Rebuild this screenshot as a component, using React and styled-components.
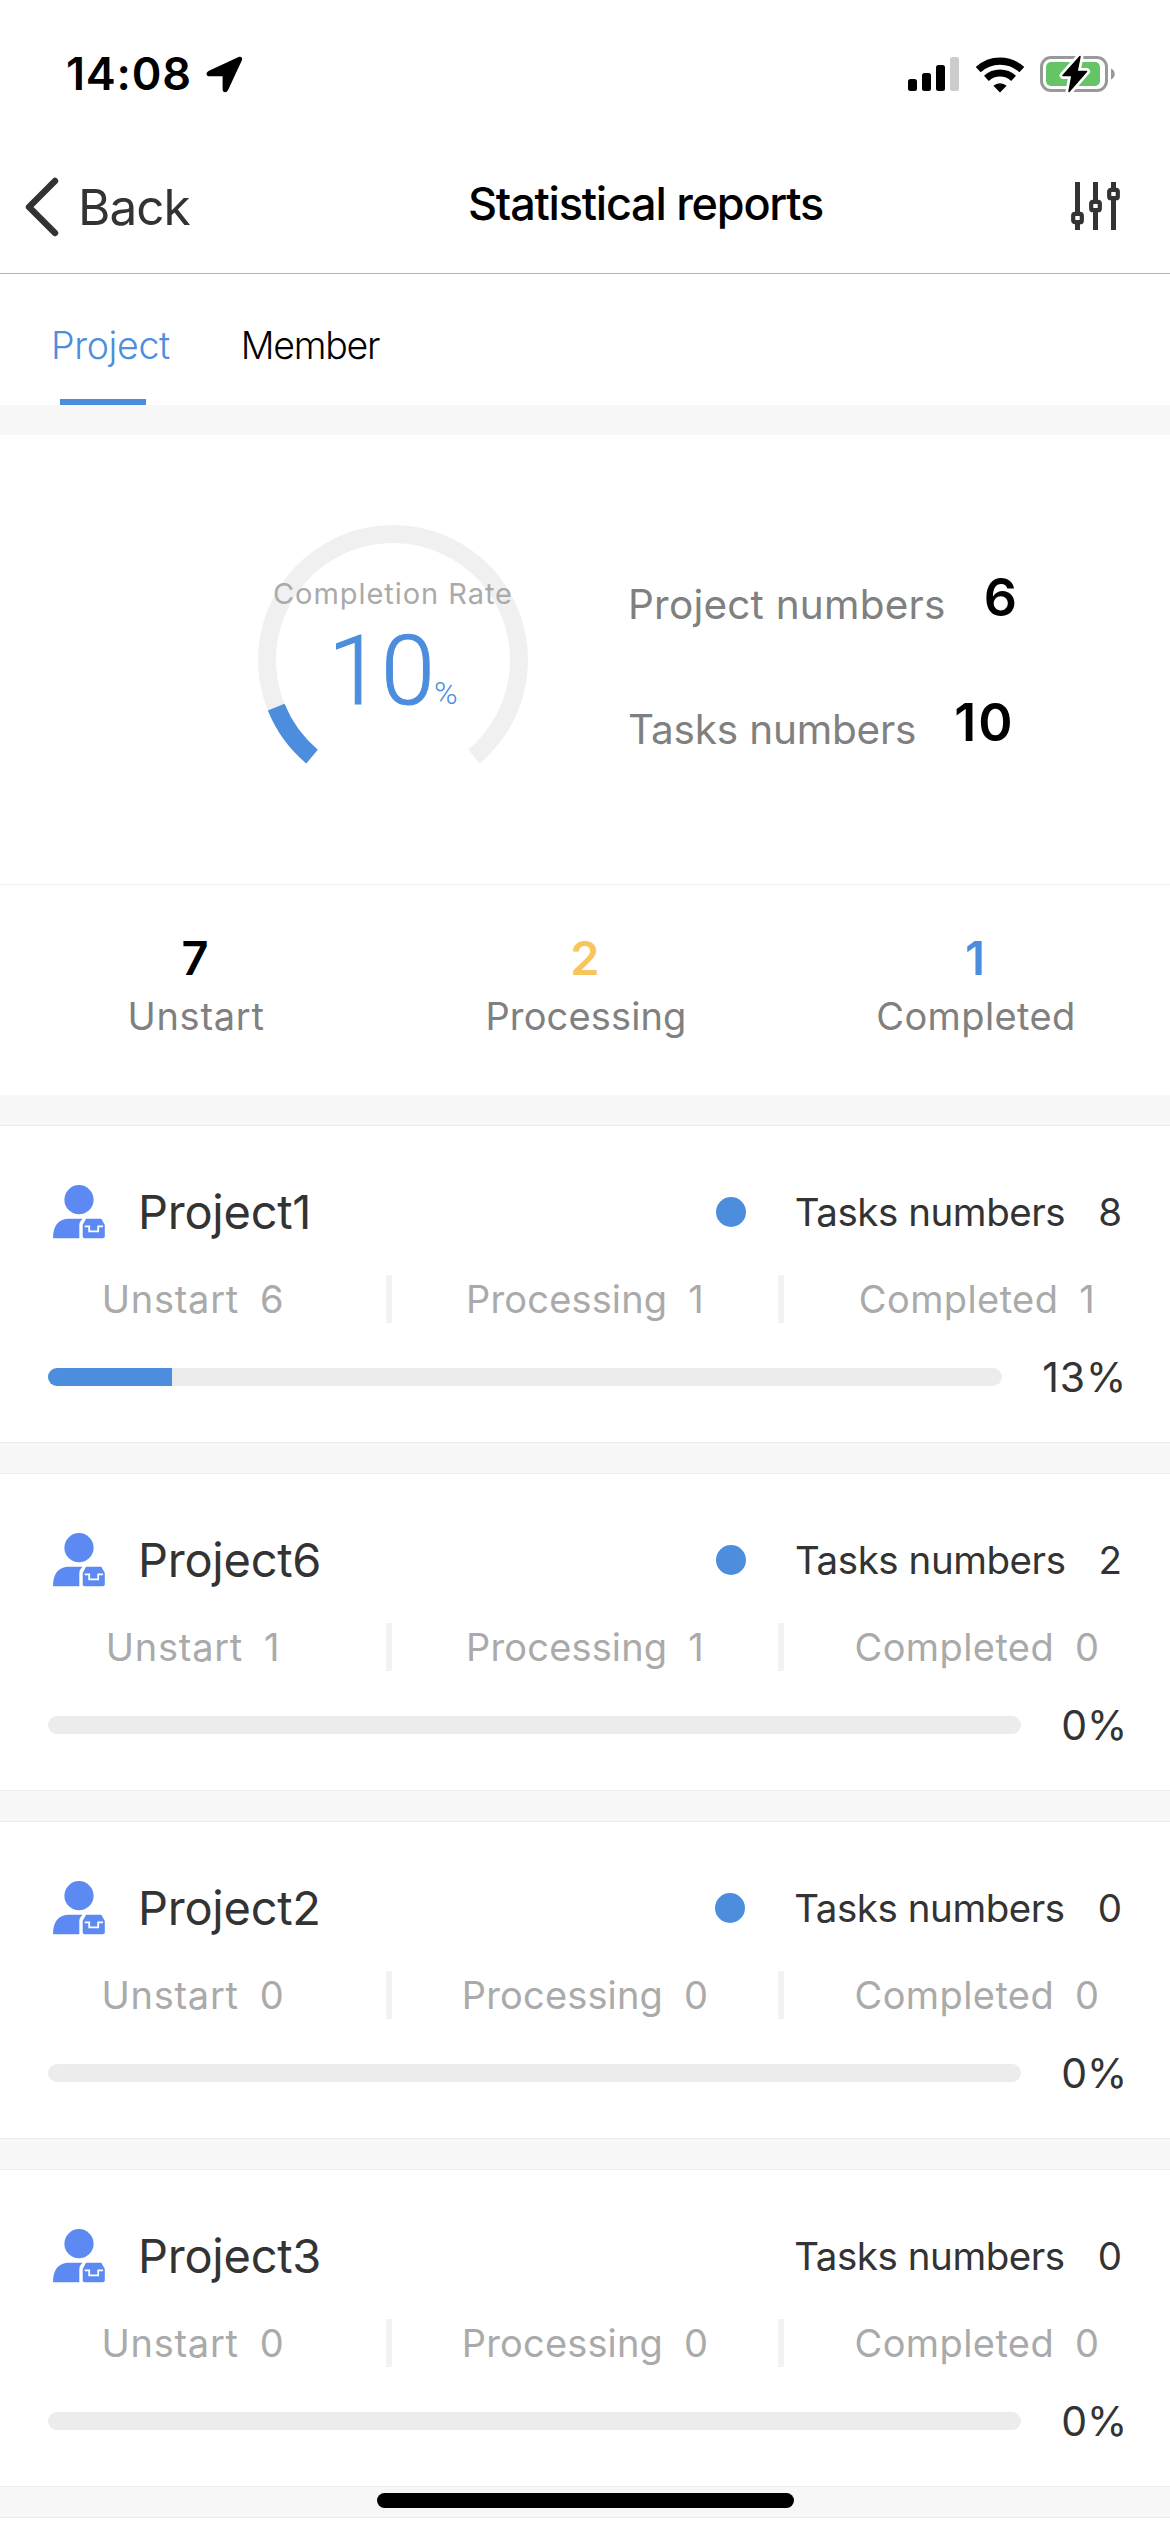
import React from "react";
import styled, { createGlobalStyle } from "styled-components";

const blue = "#4c8ddd";

const GlobalStyle = createGlobalStyle`
  body {
    margin: 0;
    background: #fff;
    font-family: Inter, "Liberation Sans", sans-serif;
    color: #333;
  }
`;

const Screen = styled.div`
  position: relative;
  width: 1170px;
  height: 2532px;
  overflow: hidden;
  background: #fff;
  white-space: nowrap;
`;

const StatusBar = styled.div`
  display: flex;
  align-items: center;
  justify-content: space-between;
  box-sizing: border-box;
  height: 141px;
  padding: 7px 54px 0 66px;
`;

const StatusGroup = styled.div`
  display: flex;
  align-items: center;
  gap: ${(p) => p.$gap}px;
`;

const Clock = styled.span`
  font-size: 45px;
  font-weight: 600;
  line-height: 56px;
  letter-spacing: 0.8px;
  color: #000;
`;

const NavBar = styled.header`
  display: grid;
  grid-template-columns: 1fr auto 1fr;
  align-items: center;
  height: 132px;
  padding: 0 49px 0 24px;
  border-bottom: 1px solid #b2b2b2;
`;

const BackButton = styled.div`
  display: flex;
  align-items: center;
  gap: 19px;
  font-size: 49.5px;
  line-height: 60px;
  letter-spacing: -1px;
`;

const Title = styled.h1`
  margin: 0 0 7px 146px;
  font-size: 45px;
  font-weight: 500;
  line-height: 56px;
  letter-spacing: -1.23px;
  color: #000;
`;

const FilterSlot = styled.div`
  display: flex;
  justify-content: flex-end;
  padding-bottom: 2px;
`;

const Tabs = styled.nav`
  display: flex;
  gap: 71px;
  height: 131px;
  padding-left: 51px;
`;

const Tab = styled.div`
  display: flex;
  flex-direction: column;
  justify-content: space-between;
  box-sizing: border-box;
  padding-top: 51px;
  font-size: 37.5px;
  font-weight: 300;
  line-height: 41px;
  letter-spacing: ${(p) => (p.$active ? -0.35 : -1.3)}px;
  color: ${(p) => (p.$active ? blue : "#000")};
`;

const Underline = styled.div`
  width: 86px;
  height: 6px;
  margin-left: 9px;
  background: ${blue};
`;

const Gap = styled.div`
  height: 30px;
  background: #f7f7f7;
`;

const Overview = styled.section`
  display: flex;
  box-sizing: border-box;
  height: 450px;
  padding: 90px 0 0 258px;
  border-bottom: 1px solid #efefef;
`;

const Gauge = styled.div`
  position: relative;
  width: 270px;
  height: 270px;
`;

const GaugeLabel = styled.div`
  position: absolute;
  left: 15px;
  top: 51px;
  font-size: 29px;
  line-height: 36px;
  letter-spacing: 0.94px;
  color: #aaa;
`;

const GaugeValue = styled.div`
  position: absolute;
  left: 70px;
  top: 96px;
  display: flex;
  align-items: baseline;
  font-family: Roboto, sans-serif;
  font-size: 97px;
  font-weight: 300;
  line-height: 100px;
  letter-spacing: -0.8px;
  color: ${blue};
  -webkit-text-stroke: 1px ${blue};
`;

const Percent = styled.span`
  font-size: 32px;
  line-height: 32px;
  -webkit-text-stroke: 0;
`;

const Facts = styled.div`
  display: flex;
  flex-direction: column;
  gap: 65px;
  padding-top: 50px;
  margin-left: 100px;
`;

const Fact = styled.div`
  display: flex;
  align-items: center;
  gap: 38px;
  height: 60px;
`;

const FactLabel = styled.span`
  font-size: 40.5px;
  line-height: 60px;
  letter-spacing: ${(p) => p.$track}px;
  color: #808080;
`;

const FactValue = styled.span`
  padding-bottom: 15px;
  font-size: 52px;
  font-weight: 600;
  line-height: 60px;
  letter-spacing: ${(p) => p.$track || 0}px;
  color: #000;
`;

const Totals = styled.section`
  display: grid;
  grid-template-columns: repeat(3, 1fr);
  box-sizing: border-box;
  height: 210px;
  padding-top: 45px;
`;

const Total = styled.div`
  display: flex;
  flex-direction: column;
  align-items: center;
  gap: 5px;
`;

const TotalValue = styled.span`
  font-size: 47px;
  font-weight: 600;
  line-height: 56px;
  color: ${(p) => p.$color};
`;

const TotalLabel = styled.span`
  margin-left: 2px;
  font-size: 38px;
  line-height: 50px;
  letter-spacing: ${(p) => p.$track}px;
  color: #808080;
`;

const Card = styled.article`
  box-sizing: border-box;
  height: 318px;
  padding-top: 56px;
  border-top: 1px solid #ececec;
  border-bottom: 1px solid #ececec;
  background: #fff;
`;

const CardHead = styled.div`
  display: flex;
  align-items: center;
  height: 60px;
  padding: 0 48px 0 53px;
`;

const ProjectName = styled.span`
  flex: 1;
  margin-left: 33px;
  font-size: 47px;
  line-height: 60px;
  letter-spacing: -0.25px;
`;

const Dot = styled.span`
  width: 30px;
  height: 30px;
  margin-right: 49px;
  border-radius: 50%;
  background: ${blue};
`;

const TaskLabel = styled.span`
  margin-right: 33px;
  font-size: 38.5px;
  line-height: 60px;
  letter-spacing: -0.45px;
`;

const TaskCount = styled.span`
  font-size: 38.5px;
  line-height: 60px;
`;

const Breakdown = styled.div`
  display: flex;
  height: 48px;
  margin-top: 33px;
`;

const Cell = styled.div`
  flex: 1 1 0;
  display: flex;
  align-items: center;
  justify-content: center;
  gap: 21px;
  font-size: 38px;
  line-height: 48px;
  letter-spacing: ${(p) => p.$track}px;
  color: #aaa;
`;

const Separator = styled.div`
  width: 6px;
  background: #f2f2f2;
`;

const ProgressRow = styled.div`
  display: flex;
  align-items: center;
  gap: 40px;
  height: 50px;
  margin-top: 29px;
  padding: 0 43px 0 48px;
`;

const Track = styled.div`
  flex: 1;
  height: 18px;
  border-radius: 9px;
  overflow: hidden;
  background: #ececec;
`;

const Fill = styled.div`
  height: 100%;
  background: ${blue};
`;

const ProgressText = styled.span`
  font-size: 41px;
  line-height: 50px;
  letter-spacing: ${(p) => p.$track}px;
`;

const NextCard = styled.div`
  height: 14px;
  border-top: 1px solid #ececec;
`;

const HomeIndicator = styled.div`
  position: absolute;
  left: 377px;
  bottom: 24px;
  width: 417px;
  height: 15px;
  border-radius: 8px;
  background: #000;
`;

const LocationIcon = () => (
  <svg width="37" height="37" viewBox="0 0 37 37">
    <path
      d="M32.6 1 3 14.8C-.6 16.5 0 20.3 3.6 20.3H16.6V33.3C16.6 37 20.6 37.4 22.2 33.8L35.8 4.6C37 2 35.2 -.2 32.6 1Z"
      fill="#000"
    />
  </svg>
);

const SignalIcon = () => (
  <svg width="52" height="36" viewBox="0 0 52 36">
    <rect x="0" y="23" width="9" height="12" rx="2.5" />
    <rect x="14" y="17" width="9" height="18" rx="2.5" />
    <rect x="28" y="9" width="9" height="26" rx="2.5" />
    <rect x="42" y="1" width="9" height="34" rx="2.5" fill="#ccc" />
  </svg>
);

const WifiIcon = () => (
  <svg width="48" height="37" viewBox="0 0 48 37">
    <g fill="none" stroke="#000">
      <path d="M2.2 13.6A32 32 0 0 1 45.8 13.6" strokeWidth="7.2" />
      <path d="M10.4 22.4A20 20 0 0 1 37.6 22.4" strokeWidth="7" />
    </g>
    <path d="M24 36.5 17.4 29.8A9.6 9.6 0 0 1 30.6 29.8Z" />
  </svg>
);

const BatteryIcon = () => (
  <svg width="76" height="38" viewBox="0 0 76 38">
    <rect x="1.5" y="2.5" width="65" height="33" rx="9.5" fill="none" stroke="#999" strokeWidth="3" />
    <path d="M71 13.5C76 15.5 76 22.5 71 24.5Z" fill="#999" />
    <rect x="6" y="7" width="54" height="24" rx="5" fill="#65c466" />
    <path
      d="M40 1.5 23 20.5H32L29 36.5 46.5 16.5H37Z"
      fill="#000"
      stroke="#fff"
      strokeWidth="7"
      strokeLinejoin="round"
      paintOrder="stroke"
    />
    <path d="M40 1.5 23 20.5H32L29 36.5 46.5 16.5H37Z" stroke="#000" strokeWidth="1.5" strokeLinejoin="round" />
  </svg>
);

const ChevronIcon = () => (
  <svg width="35" height="60" viewBox="0 0 35 60">
    <path
      d="M31 4 5 30 31 56"
      fill="none"
      stroke="#333"
      strokeWidth="6.4"
      strokeLinecap="round"
      strokeLinejoin="round"
    />
  </svg>
);

const SlidersIcon = () => (
  <svg width="50" height="48" viewBox="0 0 50 48" fill="none" stroke="#333">
    <path d="M6.5 0V48M24.5 0V48M42.5 0V48" strokeWidth="5" />
    <g fill="#fff" strokeWidth="4.2">
      <rect x="2.2" y="31.8" width="8.6" height="8.4" rx="1.8" />
      <rect x="20.2" y="19.8" width="8.6" height="8.4" rx="1.8" />
      <rect x="38.2" y="7.8" width="8.6" height="8.4" rx="1.8" />
    </g>
  </svg>
);

const ProjectIcon = () => (
  <svg width="52" height="54" viewBox="0 0 52 54" fill="#5c8af2">
    <circle cx="26" cy="14.7" r="14.6" />
    <path d="M0 53.3C0 40 6 33.7 16 33.7H29.5Q26.3 36.5 26.3 40V53.3Z" />
    <path d="M33 33.7H48.3L51.8 40V51.3Q51.8 53.3 49.8 53.3H31.7Q29.7 53.3 29.7 51.3V40Z" />
    <path d="M31.7 41.3H36.2V46.3H45.2V41.3H50" fill="none" stroke="#fff" strokeWidth="1.8" />
  </svg>
);

const point = (deg) => {
  const a = (deg * Math.PI) / 180;
  return `${135 - 126 * Math.sin(a)} ${135 + 126 * Math.cos(a)}`;
};

const GaugeRing = ({ value }) => (
  <svg width="270" height="270" viewBox="0 0 270 270" fill="none" strokeWidth="18">
    <path d={`M${point(40)}A126 126 0 1 1 ${point(320)}`} stroke="#f0f0f0" />
    <path d={`M${point(40)}A126 126 0 0 1 ${point(40 + 280 * value)}`} stroke={blue} />
  </svg>
);

const totals = [
  { value: 7, label: "Unstart", color: "#000", track: 0.73 },
  { value: 2, label: "Processing", color: "#f7c55c", track: 0.15 },
  { value: 1, label: "Completed", color: blue, track: 0.4 },
];

const projects = [
  { name: "Project1", tasks: 8, counts: [6, 1, 1], percent: 13, dot: true },
  { name: "Project6", tasks: 2, counts: [1, 1, 0], percent: 0, dot: true },
  { name: "Project2", tasks: 0, counts: [0, 0, 0], percent: 0, dot: true },
  { name: "Project3", tasks: 0, counts: [0, 0, 0], percent: 0, dot: false },
];

const ProjectCard = ({ project }) => (
  <Card>
    <CardHead>
      <ProjectIcon />
      <ProjectName>{project.name}</ProjectName>
      {project.dot && <Dot />}
      <TaskLabel>Tasks numbers</TaskLabel>
      <TaskCount>{project.tasks}</TaskCount>
    </CardHead>
    <Breakdown>
      {totals.map((t, i) => (
        <React.Fragment key={t.label}>
          {i > 0 && <Separator />}
          <Cell $track={t.track}>
            <span>{t.label}</span>
            <span>{project.counts[i]}</span>
          </Cell>
        </React.Fragment>
      ))}
    </Breakdown>
    <ProgressRow>
      <Track>
        <Fill style={{ width: `${project.percent}%` }} />
      </Track>
      <ProgressText $track={project.percent > 9 ? 0.8 : -0.2}>{project.percent}%</ProgressText>
    </ProgressRow>
  </Card>
);

export default function App() {
  return (
    <Screen>
      <GlobalStyle />
      <StatusBar>
        <StatusGroup $gap={14}>
          <Clock>14:08</Clock>
          <LocationIcon />
        </StatusGroup>
        <StatusGroup $gap={16}>
          <SignalIcon />
          <WifiIcon />
          <BatteryIcon />
        </StatusGroup>
      </StatusBar>
      <NavBar>
        <BackButton>
          <ChevronIcon />
          Back
        </BackButton>
        <Title>Statistical reports</Title>
        <FilterSlot>
          <SlidersIcon />
        </FilterSlot>
      </NavBar>
      <Tabs>
        <Tab $active>
          Project
          <Underline />
        </Tab>
        <Tab>Member</Tab>
      </Tabs>
      <Gap />
      <Overview>
        <Gauge>
          <GaugeRing value={0.1} />
          <GaugeLabel>Completion Rate</GaugeLabel>
          <GaugeValue>
            10<Percent>%</Percent>
          </GaugeValue>
        </Gauge>
        <Facts>
          <Fact>
            <FactLabel $track={0.22}>Project numbers</FactLabel>
            <FactValue>6</FactValue>
          </Fact>
          <Fact>
            <FactLabel $track={-0.19}>Tasks numbers</FactLabel>
            <FactValue $track={2}>10</FactValue>
          </Fact>
        </Facts>
      </Overview>
      <Totals>
        {totals.map((t) => (
          <Total key={t.label}>
            <TotalValue $color={t.color}>{t.value}</TotalValue>
            <TotalLabel $track={t.track}>{t.label}</TotalLabel>
          </Total>
        ))}
      </Totals>
      {projects.map((p) => (
        <React.Fragment key={p.name}>
          <Gap />
          <ProjectCard project={p} />
        </React.Fragment>
      ))}
      <Gap />
      <NextCard />
      <HomeIndicator />
    </Screen>
  );
}
